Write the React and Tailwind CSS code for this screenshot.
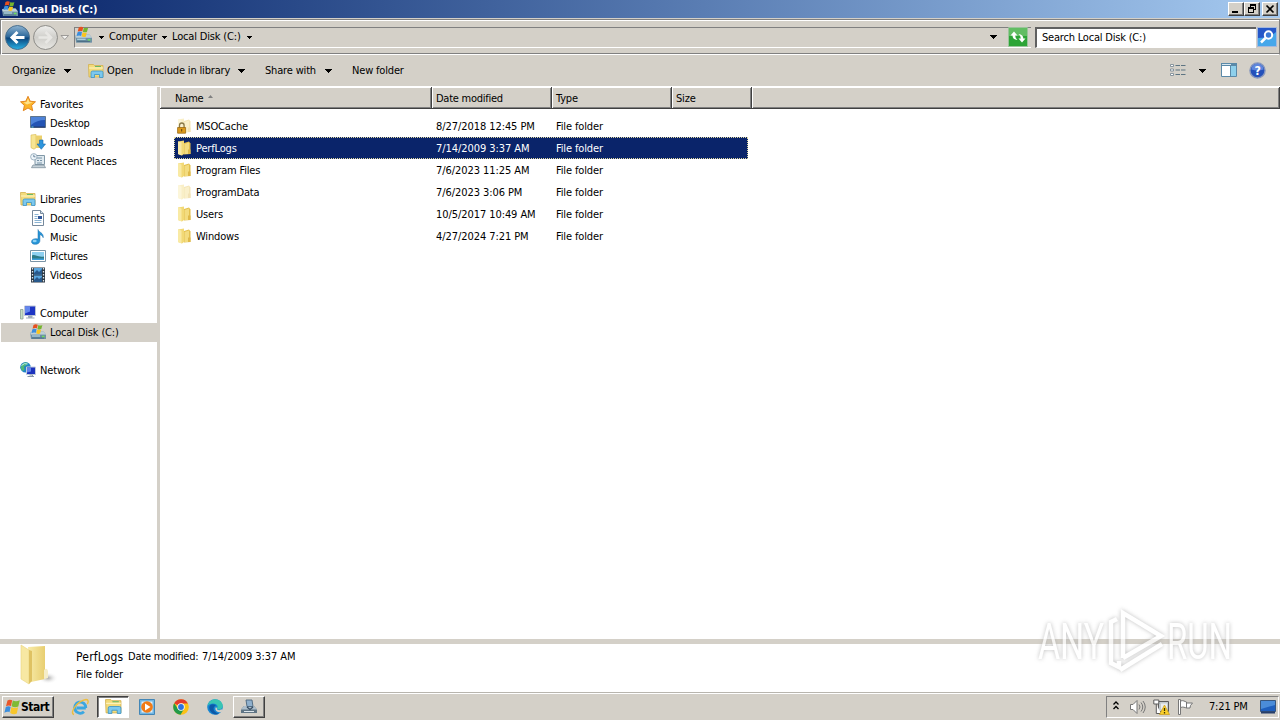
import { clsx } from 'clsx';

function Drive({ className = 'w-4 h-4' }) {
  return (
    <svg viewBox="0 0 16 16" className={className}>
      <path d="M0 8.500 2.500 7.500h11l2.500 3V15H1z" fill="#7f9aab" />
      <path d="M0 8.500 2.500 7.500h11l2.500 3H1z" fill="#bccfd8" />
      <path d="M1 11h14.800v4H1z" fill="#6b8fa5" />
      <path d="M2 12h8" stroke="#bfe0ec" />
      <path d="M2 14h12" stroke="#4b6d83" />
      <path d="M12 12.500h2.500" stroke="#6fe05c" strokeWidth="1.500" />
      <path d="M3.500 1C5 0 6.400.1 7.800.8L6.800 4.600C5.600 3.900 4.200 4 2.600 4.700z" fill="#e5501f" />
      <path d="M8.400 1c1.300.7 2.700.7 4 0L11.300 5c-1.300.7-2.700.6-3.900-.1z" fill="#76b52f" />
      <path d="M2.400 5.300c1.400-.8 2.800-.8 4.200-.1L5.700 8.900C4.500 8.200 3.100 8.300 1.500 9z" fill="#3b8ede" />
      <path d="M7.200 5.500c1.300.7 2.600.7 3.900.2L10.100 9.600c-1.300.5-2.600.4-3.900-.4z" fill="#fac41f" />
    </svg>
  );
}

function Flag({ className }) {
  return (
    <svg viewBox="0 0 16 16" className={className}>
      <path d="M3.500 1.500C5 .4 6.600.5 8.200 1.300L7 7C5.400 6.200 3.900 6.300 2 7.300z" fill="#e8562a" />
      <path d="M8.800 1.600c2 .9 4.300 1.200 7-.4L14.300 7.400c-2.200 1.100-4.500 1-6.700-.1z" fill="#7fba35" />
      <path d="M1.800 8c1.600-1 3.300-1 4.900-.2L5.500 13.200C4 12.400 2.400 12.600.4 13.700z" fill="#3b8ede" />
      <path d="M7.400 8.100c2 1.100 4.400 1.200 6.700.2L12.800 14.500c-2.300 1.100-4.500.8-6.600-.6z" fill="#f8c62c" />
    </svg>
  );
}

function Library({ className = 'w-4 h-4' }) {
  return (
    <svg viewBox="0 0 16 16" className={className}>
      <path d="M.5 1.500h5l1 1h8.500V14H1z" fill="#f3db7b" stroke="#d2b04e" strokeWidth=".8" />
      <path d="M1 5h14" stroke="#fff6c4" />
      <path d="M7 3.500h6" stroke="#69b967" />
      <path d="M3 14.500v-5q0-1.500 1.500-1.500h9q1.500 0 1.500 1.500v5h-3.500v-3H6.500v3z" fill="#7cc8ee" stroke="#3b93c5" strokeWidth=".8" />
    </svg>
  );
}

function Folder({ faded, locked }) {
  return (
    <svg viewBox="0 0 16 16" className="w-4 h-4">
      <g opacity={faded ? 0.4 : 1}>
        <path d="M1 1.500 7 .5v13.500l-2 1.500L1 14z" fill="#f2d976" />
        <path d="M1 1.500 4.500 2.500v13L1 14z" fill="#f9eaa4" />
        <path d="M7 3 12 1.500l1.500 2v10.500L7 14.500z" fill="#e3c04e" />
        <path d="M7.500 4 12 2.500v11.500L7.500 14z" fill="#f3dc80" />
        <path d="M11 9.500h2.500V14H11z" fill="#dfb94a" />
      </g>
      {locked && (
        <>
          <path d="M2.500 10V7.500a2.300 2.500 0 0 1 4.600 0V10" fill="none" stroke="#8a7a4a" strokeWidth="1.300" />
          <path d="M.6 9.500h8V15.200h-8z" fill="#dc9a1c" stroke="#9a6a14" strokeWidth=".8" />
          <path d="M4.700 11v2.500" stroke="#5e4210" />
        </>
      )}
    </svg>
  );
}

function Star() {
  return (
    <svg viewBox="0 0 16 16" className="w-4 h-4">
      <path d="m8 .3 2.200 4.900 5.300.6-3.900 3.600 1.100 5.300L8 12l-4.700 2.700 1.100-5.300L.5 5.800l5.300-.6z" fill="#fbb42a" stroke="#e07f1a" strokeWidth=".9" />
      <path d="m8 2.500 1.400 3.600 3.400.4-5.800 1.900-3.500-1.900 3.100-.4z" fill="#ffe28a" />
    </svg>
  );
}

function Desktop() {
  return (
    <svg viewBox="0 0 16 16" className="w-4 h-4">
      <path d="M.5 1.500h15v11H.5z" fill="#2354b4" stroke="#5f758c" />
      <path d="M1 2h14v3Q7 5 1 10z" fill="#4d82d8" />
      <path d="M1 12h14" stroke="#25396b" />
      <path d="M1.500 12h2" stroke="#5fd0ea" />
    </svg>
  );
}

function Downloads() {
  return (
    <svg viewBox="0 0 16 16" className="w-4 h-4">
      <path d="M1 1 6 .4v13.400L4 15.200 1 13.700z" fill="#f7e593" stroke="#d9b850" strokeWidth=".6" />
      <path d="M6 1.500h6V14H6z" fill="#ecd06c" />
      <path d="M9.500 6h3.500v4h2.500l-4.200 5.300L7 10h2.500z" fill="#2d95dd" stroke="#1769ad" strokeWidth=".6" />
    </svg>
  );
}

function Recent() {
  return (
    <svg viewBox="0 0 16 16" className="w-4 h-4">
      <path d="M5 2.500h9.500v9H5z" fill="#dfe9ef" stroke="#8198a7" />
      <path d="M7 5h5M7 7.500h2m1 0h2M7 10h5" stroke="#7894a8" />
      <path d="M3 12h11l1.500 2.700H1.500z" fill="#c6d2d9" stroke="#7f919d" strokeWidth=".8" />
      <circle cx="3.800" cy="3.800" r="3.200" fill="#eef5fa" stroke="#8da3b5" strokeWidth=".8" />
      <path d="M3.800 1.800v2h1.700" stroke="#4b6a86" strokeWidth=".8" fill="none" />
    </svg>
  );
}

function Documents() {
  return (
    <svg viewBox="0 0 16 16" className="w-4 h-4">
      <path d="M2.500.5h8l3 3v12h-11z" fill="#fff" stroke="#76899c" />
      <path d="M10.500.5v3h3" fill="#d2e0ec" stroke="#76899c" />
      <path d="M4.500 4.500h4m-4 2h3m-3 2h3m-3 2h7m-7 2h7" stroke="#8ab3d3" />
      <path d="M8 6h4v3H8z" fill="#31589b" />
    </svg>
  );
}

function Music() {
  return (
    <svg viewBox="0 0 16 16" className="w-4 h-4">
      <path d="M8 .5c.6 2.800 6 3.300 5.200 8.200-.8-2-2-2.700-3.300-3v6c0 4.500-8.400 4.800-8.400 1 0-2.600 3.800-3.700 6.500-2.600z" fill="#2796d8" stroke="#1a6caa" strokeWidth=".5" />
      <ellipse cx="4.700" cy="12" rx="2" ry="1.200" fill="#8ed2f5" />
    </svg>
  );
}

function Pictures() {
  return (
    <svg viewBox="0 0 16 16" className="w-4 h-4">
      <path d="M.5 2.500h15v11H.5z" fill="#fff" stroke="#7a94a6" />
      <path d="M2 4h12v8H2z" fill="#8fd0f0" />
      <path d="M2 7.500c3-1.500 5 2 12 1V12H2z" fill="#2e7b87" />
      <path d="M2 10.500h12V12H2z" fill="#3c9edb" />
    </svg>
  );
}

function Videos() {
  return (
    <svg viewBox="0 0 16 16" className="w-4 h-4">
      <path d="M1 .5h14v15H1z" fill="#2b3742" />
      <path d="M4 1h8v6.500H4zM4 8.500h8V15H4z" fill="#5aa7e0" />
      <path d="m4 6 3-3 2 2 3-3v5.500H4zM4 13l3-3 2 2 3-2v5H4z" fill="#28598c" />
      <path d="M2.500 1v14M13.500 1v14" stroke="#dfe8ee" strokeWidth="1.300" strokeDasharray="1.500 1.500" />
    </svg>
  );
}

function Computer() {
  return (
    <svg viewBox="0 0 16 16" className="w-4 h-4">
      <path d="M.5 4.500h2.500v9.500H.5z" fill="#c7dfc4" stroke="#8c9f94" strokeWidth=".8" />
      <path d="M4.500 1h11v9.500h-11z" fill="#1d35c4" stroke="#bcc5d6" />
      <path d="M5 1.500h5v5L5 8.500z" fill="#6487ee" />
      <path d="M8.500 11h3.500v1.500H8.500zM6 13h8.500" fill="#9eabba" stroke="#9eabba" />
    </svg>
  );
}

function Network() {
  return (
    <svg viewBox="0 0 16 16" className="w-4 h-4">
      <circle cx="5.500" cy="5.300" r="5.300" fill="#2184c8" />
      <path d="M2 2.500C4.500-.5 7 .5 8 1L6 3.500 4 4.500 4.500 7.500 3 9C.5 7.500.3 5 2 2.500z" fill="#4fb777" />
      <path d="M1.500 3.500q3-3 6-1.500" stroke="#b8ecf2" fill="none" />
      <path d="M6.500 5h9v7.500h-9z" fill="#1c32bd" stroke="#c1cbdc" />
      <path d="M7 5.500h4v4l-4 1z" fill="#5f80e8" />
      <path d="M9.500 13h3v1.500M7.500 14.500h6.500" stroke="#8797a8" fill="none" />
    </svg>
  );
}

function Caret({ className }) {
  return (
    <svg viewBox="0 0 7 4" className={clsx('shrink-0', className)} shapeRendering="crispEdges">
      <path d="M0 0h7L3.500 4z" fill="#000" />
    </svg>
  );
}

const groups = [
  {
    name: 'Favorites', icon: <Star />, items: [
      { name: 'Desktop', icon: <Desktop /> },
      { name: 'Downloads', icon: <Downloads /> },
      { name: 'Recent Places', icon: <Recent /> },
    ],
  },
  {
    name: 'Libraries', icon: <Library />, items: [
      { name: 'Documents', icon: <Documents /> },
      { name: 'Music', icon: <Music /> },
      { name: 'Pictures', icon: <Pictures /> },
      { name: 'Videos', icon: <Videos /> },
    ],
  },
  { name: 'Computer', icon: <Computer />, items: [{ name: 'Local Disk (C:)', icon: <Drive />, active: true }] },
  { name: 'Network', icon: <Network />, items: [] },
];

const files = [
  { name: 'MSOCache', date: '8/27/2018 12:45 PM', faded: true, locked: true },
  { name: 'PerfLogs', date: '7/14/2009 3:37 AM', selected: true },
  { name: 'Program Files', date: '7/6/2023 11:25 AM' },
  { name: 'ProgramData', date: '7/6/2023 3:06 PM', faded: true },
  { name: 'Users', date: '10/5/2017 10:49 AM' },
  { name: 'Windows', date: '4/27/2024 7:21 PM' },
];

function WinButton({ children }) {
  return (
    <div className="w-4 h-3.5 bg-[#d4d0c8] border border-t-white border-l-white border-r-[#404040] border-b-[#404040] shadow-[inset_-1px_-1px_0_#808080]">
      <svg viewBox="0 0 14 12" className="w-3.5 h-3" fill="none" stroke="#000" shapeRendering="crispEdges">{children}</svg>
    </div>
  );
}

function TitleBar() {
  return (
    <header className="h-[18px] shrink-0 flex items-center pl-0.5 pr-0.5 bg-linear-to-r from-[#0a246a] to-[#a6caf0] text-white font-bold">
      <Drive className="w-4 h-4 mr-px" />
      <span className="flex-1 pt-0.5 tracking-[-0.12px]">Local Disk (C:)</span>
      <div className="flex">
        <WinButton><path d="M3 9h6" strokeWidth="2" /></WinButton>
        <WinButton>
          <path d="M5 2h6M3 5h6" strokeWidth="2" />
          <path d="M5.500 2v3M10.500 2v5M9 6.500h2M3.500 5v5M8.500 5v5M3 9.500h6" />
        </WinButton>
        <div className="w-0.5" />
        <WinButton><path d="m3.500 2.500 7 7m0-7-7 7" strokeWidth="1.700" shapeRendering="auto" /></WinButton>
      </div>
    </header>
  );
}

function NavBar() {
  return (
    <div className="h-9 mt-px shrink-0 flex items-center pl-1 pr-0.5 border border-[#808080] border-b-white shadow-[inset_1px_1px_0_#fff,inset_0_-1px_0_#808080]">
      <svg viewBox="0 0 64 28" className="w-16 h-7 shrink-0">
        <defs>
          <linearGradient id="back" x2="0" y2="1">
            <stop offset="0" stopColor="#8fb4d2" /><stop offset=".48" stopColor="#2a6699" />
            <stop offset=".52" stopColor="#0b437b" /><stop offset="1" stopColor="#29b3e6" />
          </linearGradient>
          <linearGradient id="fwd" x2="0" y2="1">
            <stop offset="0" stopColor="#efefed" /><stop offset=".5" stopColor="#cfceca" /><stop offset="1" stopColor="#e9e8e4" />
          </linearGradient>
        </defs>
        <circle cx="12.500" cy="14.500" r="12" fill="url(#back)" stroke="#4a6f8d" />
        <path d="M19.500 14.500H7m5.500-5.500L7 14.500l5.500 5.500" fill="none" stroke="#fff" strokeWidth="3" />
        <circle cx="40.500" cy="14.500" r="12" fill="url(#fwd)" stroke="#8d8c88" />
        <path d="M33.500 14.500H46m-5.500-5.500L46 14.500l-5.500 5.500" fill="none" stroke="#e8e7e4" strokeWidth="2.500" />
        <path d="M56 12.500h7.500L59.800 16.500z" fill="#f4f3f0" stroke="#8a8986" strokeWidth=".8" />
      </svg>
      <div className="flex-1 h-[21px] ml-[5px] flex items-center border-t border-l border-[#808080] border-b border-b-white tracking-[-0.17px]">
        <Drive className="w-[17px] h-[18px] -mt-1" />
        <Caret className="w-[5px] h-[3px] ml-[7px]" />
        <span className="ml-[5px] w-[47px]">Computer</span>
        <Caret className="w-[5px] h-[3px] ml-1.5" />
        <span className="ml-[5px] w-[69px]">Local Disk (C:)</span>
        <Caret className="w-[5px] h-[3px] ml-1.5" />
        <Caret className="w-[7px] h-1 ml-auto mr-[11px]" />
        <svg viewBox="0 0 20 20" className="w-5 h-5 mr-[3px]">
          <path d="M.5.5h19v19H.5z" fill="#2da436" stroke="#9bc49b" />
          <path d="M1 1h18v8H1z" fill="#62bd63" />
          <path d="M2.500 8.500 6 4.500l3.500 4H7.200q0 3 2.300 4.500-5-.5-5-4.500z" fill="#fff" />
          <path d="m10.500 11.500 3.500 4 3.500-4h-2.200q0-4-4.800-4.500 2.300 1.500 2.300 4.500z" fill="#fff" />
        </svg>
      </div>
      <div className="w-[221px] h-[21px] ml-1 flex items-center pl-[5px] bg-white border-t-2 border-l-2 border-[#606060] border-b border-b-white tracking-[-0.2px]">
        Search Local Disk (C:)
      </div>
      <svg viewBox="0 0 20 20" className="w-5 h-5 ml-px shrink-0">
        <path d="M.5.5h19v19H.5z" fill="#2557c8" stroke="#a4b8dc" />
        <path d="M1 11c8 0 14-2 18-6v14H1z" fill="#46a7ea" />
        <circle cx="11.500" cy="8" r="3.700" fill="#3b79d6" stroke="#fff" strokeWidth="2" />
        <path d="m8.500 11-4.500 4.500" stroke="#fff" strokeWidth="2.500" />
      </svg>
    </div>
  );
}

function Toolbar() {
  return (
    <div className="h-[31px] shrink-0 flex items-center pl-3 pr-3.5">
      <span className="w-[52px] tracking-[-0.12px]">Organize</span>
      <Caret className="w-[7px] h-1" />
      <Library className="w-4 h-4 ml-[17px]" />
      <span className="ml-[3px] w-[43px] tracking-[-0.02px]">Open</span>
      <span className="w-[88px]">Include in library</span>
      <Caret className="w-[7px] h-1" />
      <span className="ml-5 w-[60px]">Share with</span>
      <Caret className="w-[7px] h-1" />
      <span className="ml-5">New folder</span>
      <svg viewBox="0 0 16 14" className="w-4 h-3.5 ml-auto -mt-0.5" fill="none">
        <path d="M.5 1.500h3v2h-3zM.5 6h3v2h-3zM.5 10.500h3v2h-3z" fill="#fff" stroke="#7d8b96" strokeWidth=".9" />
        <path d="M5.500 2.500H10m1 0h4.500M5.500 7H10m1 0h4.500M5.500 11.500H10m1 0h4.500" stroke="#5d7482" />
      </svg>
      <Caret className="w-[7px] h-1 ml-[13px]" />
      <svg viewBox="0 0 16 14" className="w-4 h-3.5 ml-[15px] -mt-0.5">
        <path d="M.5.5h15v13H.5z" fill="#fff" stroke="#5a89a8" />
        <path d="M0 0h16v3H0z" fill="#5a89a8" />
        <path d="M1 1h9v1H1z" fill="#d8e7f0" />
        <path d="M10 3h5v10h-5z" fill="#8ed0ec" /><path d="M9.500 3v10" stroke="#5a89a8" />
      </svg>
      <svg viewBox="0 0 18 18" className="w-[17px] h-[17px] ml-3 -mt-px">
        <circle cx="9" cy="9" r="8" fill="#2450ba" stroke="#8797bd" strokeWidth="1.500" />
        <path d="M2.500 8a6.500 6.500 0 0 1 13 0q-6 2-13 0z" fill="#5f86dc" />
        <text x="9" y="13.500" textAnchor="middle" fill="#fff" fontSize="13" fontWeight="700">?</text>
      </svg>
    </div>
  );
}

function Sidebar() {
  return (
    <aside className="w-[157px] shrink-0 bg-white pt-2 pl-px tracking-[-0.16px]">
      {groups.map((g) => (
        <section key={g.name} className="mb-[19px]">
          <div className="h-[19px] flex items-center gap-1 pl-[19px] pb-px">{g.icon}<span className="pt-0.5">{g.name}</span></div>
          {g.items.map((i) => (
            <div key={i.name} className={clsx('h-[19px] flex items-center gap-1 pl-[29px] pb-px', i.active && 'bg-[#d4d0c8]')}>
              {i.icon}<span className="pt-0.5">{i.name}</span>
            </div>
          ))}
        </section>
      ))}
    </aside>
  );
}

const cell = 'h-full flex items-center pt-0.5 border-r border-r-[#404040] shadow-[inset_1px_1px_0_#fff,inset_-1px_-1px_0_#808080]';

function FileList() {
  return (
    <main className="flex-1 flex flex-col bg-white">
      <div className="h-[22px] flex bg-[#d4d0c8] border-b border-[#404040]">
        <div className={clsx(cell, 'w-[272px] pl-[15px]')}>
          <span>Name</span>
          <svg viewBox="0 0 5 3" className="w-[5px] h-[3px] ml-1 -mt-1"><path d="M0 3h5L2.500 0z" fill="#808080" /></svg>
        </div>
        <div className={clsx(cell, 'w-[120px] pl-1 tracking-[-0.25px]')}>Date modified</div>
        <div className={clsx(cell, 'w-[120px] pl-1')}>Type</div>
        <div className={clsx(cell, 'w-20 pl-1')}>Size</div>
        <div className={clsx(cell, 'flex-1')} />
      </div>
      <div className="pt-1.5 pl-3.5">
        {files.map((f) => (
          <div
            key={f.name}
            className={clsx(
              'w-[574px] h-[22px] flex items-center pl-0.5 border border-dotted',
              f.selected ? 'bg-[#0a246a] border-[#e0d9a0] text-white' : 'border-transparent',
            )}
          >
            <Folder faded={f.faded} locked={f.locked} />
            <span className="ml-[3px] pt-0.5 w-60">{f.name}</span>
            <span className="w-[120px] pt-0.5 tracking-[-0.07px]">{f.date}</span>
            <span className="pt-0.5 tracking-[-0.14px]">File folder</span>
          </div>
        ))}
      </div>
    </main>
  );
}

function Details() {
  return (
    <div className="h-[49px] shrink-0 flex bg-white border-b border-[#b8b5ae]">
      <svg viewBox="0 0 40 44" className="w-10 h-11 ml-[19px]">
        <defs>
          <linearGradient id="fold"><stop offset="0" stopColor="#f8eba9" /><stop offset="1" stopColor="#e8ce70" /></linearGradient>
          <radialGradient id="shade"><stop offset="0" stopColor="#aaa" /><stop offset="1" stopColor="#fff" stopOpacity="0" /></radialGradient>
        </defs>
        <ellipse cx="29" cy="34" rx="10" ry="6" fill="url(#shade)" />
        <path d="M9 3 26 2v33l-14 3z" fill="url(#fold)" />
        <path d="M2 1 10 6v34l-8-5z" fill="#f7e8a3" stroke="#e9d37d" strokeWidth=".6" />
        <path d="M10 6v34l3-3V7z" fill="#dfc263" />
        <path d="M25 26q3-3 4 1v7l-4 1z" fill="#f5edc9" />
      </svg>
      <div className="ml-[17px] pt-1">
        <div className="h-[18px] flex items-center">
          <span className="w-[52px] text-xs tracking-[0.2px]">PerfLogs</span>
          <span className="w-[74px] tracking-[-0.22px]">Date modified:</span>
          <span className="tracking-[-0.07px]">7/14/2009 3:37 AM</span>
        </div>
        <div className="h-[18px] flex items-center tracking-[-0.14px]">File folder</div>
      </div>
    </div>
  );
}

function Taskbar() {
  return (
    <footer className="h-[27px] shrink-0 flex items-center pl-0.5 pr-px pb-px border-t border-white">
      <div className="w-[52px] h-[22px] flex items-center pl-px border border-t-white border-l-white border-r-[#404040] border-b-[#404040] shadow-[inset_-1px_-1px_0_#808080] font-bold text-xs tracking-[-0.5px]">
        <Flag className="w-4 h-4 mr-px shrink-0" />Start
      </div>
      <svg viewBox="0 0 18 18" className="w-[18px] h-[18px] ml-[17px]" fill="none">
        <path d="M14.800 10H5.500m9.300 0A5.600 5.600 0 1 0 13 13.800" stroke="#3ba7e1" strokeWidth="2.800" />
        <path d="M3 16.500C-2 15.500 6 3 15 1.500c3 0 2.300 3 1.300 4.500" stroke="#edbd3d" strokeWidth="1.400" />
      </svg>
      <div className="w-8 h-[22px] ml-2 flex items-center justify-center bg-white border border-[#404040] border-r-white border-b-white shadow-[inset_1px_1px_0_#808080]">
        <Library className="w-[17px] h-[17px]" />
      </div>
      <svg viewBox="0 0 16 16" className="w-4 h-4 ml-2.5">
        <path d="M.5.5h15v15H.5z" fill="#70b6e3" stroke="#4386b6" />
        <path d="M2.500 2.500h11v11h-11z" fill="#e2eff7" />
        <circle cx="8" cy="8" r="5.800" fill="#f17b17" /><path d="M6 4.500 11.500 8 6 11.500z" fill="#fff" />
      </svg>
      <svg viewBox="0 0 16 16" className="w-4 h-4 ml-[18px]">
        <circle cx="8" cy="8" r="7.800" fill="#fbc116" />
        <path d="M8 8 1.200 4.200A7.800 7.800 0 0 1 14.900 4.500H8z" fill="#e33b2e" />
        <path d="M1.200 4.200A7.800 7.800 0 0 0 7.500 15.800L11 10 5 10z" fill="#229a4a" />
        <circle cx="8" cy="8" r="3.700" fill="#fff" /><circle cx="8" cy="8" r="2.900" fill="#2e72df" />
      </svg>
      <svg viewBox="0 0 16 16" className="w-4 h-4 ml-[18px]">
        <circle cx="8" cy="8" r="7.800" fill="#1686d2" />
        <path d="M.5 7C1.500 2.500 4.500.2 8.500.2c5 .2 8.200 4.600 7 8-1.200 3-5.500 2.600-5.500 1.300 0-1 .8-1.200.5-2.500C9.800 4.500 4 3 .5 7z" fill="#39c5b3" />
        <path d="M9 6C3 3.500 1 8 3 11.500 5 15 9 16.500 12 14.700 8 14 5.500 11 7 8z" fill="#0d59a8" />
        <path d="M10 9.500c-.5 1.800 3.500 2.400 5 .5l1 1.500-1.800 1.800C10 13.500 7 11 9 8z" fill="#d4d0c8" />
      </svg>
      <div className="w-8 h-[22px] ml-2.5 flex items-center justify-center border border-t-white border-l-white border-r-[#404040] border-b-[#404040] shadow-[inset_-1px_-1px_0_#808080]">
        <svg viewBox="0 0 18 18" className="w-[18px] h-[18px]">
          <path d="M1 11.500 4 8h10l3 3.500V15H1z" fill="#5f7484" /><path d="M1 11.500 4 8h10l3 3.500z" fill="#aebfcc" />
          <path d="M6 2h6l1 6.500H7z" fill="#8fb0cd" stroke="#4a657d" strokeWidth=".9" />
          <path d="M4 13.500h10" stroke="#dce5eb" /><path d="m7 9 3 2.500L13 9" stroke="#364c62" strokeWidth="1.300" fill="none" />
        </svg>
      </div>
      <div className="w-[173px] h-[22px] ml-auto flex items-center pl-1.5 border border-[#808080] border-r-white border-b-white">
        <svg viewBox="0 0 6 9" className="w-1.5 h-[9px] -mt-0.5" fill="none" stroke="#000" strokeWidth="1.300"><path d="M.5 3.500 3 1l2.500 2.500M.5 8 3 5.500 5.500 8" /></svg>
        <svg viewBox="0 0 17 16" className="w-[17px] h-4 ml-2.5" fill="none" stroke="#777">
          <path d="M1.500 5.500h2.500L8 1.500v13l-4-4H1.500z" fill="#fff" />
          <path d="M10 5.500q2 2.500 0 5M12 3.500q3.500 4.500 0 9M14 2q4.500 6 0 12" />
        </svg>
        <svg viewBox="0 0 17 16" className="w-[17px] h-4 ml-[7px]" fill="none">
          <path d="M5.500 2.500h10v10h-10z" fill="#c3cacd" stroke="#5c5c5c" /><path d="M8 4.500h6v6H8z" fill="#e9edef" />
          <path d="M.8 1h5v4h-5zM3.300 5v9.500H8" fill="#fff" stroke="#5c5c5c" />
          <path d="m11.500 6 5 9.500h-10z" fill="#fad02a" stroke="#c99a18" strokeWidth=".7" /><path d="M11.500 9v3m0 1v1.500" stroke="#3a2f00" strokeWidth="1.300" />
        </svg>
        <svg viewBox="0 0 17 16" className="w-[17px] h-4 ml-[7px]" fill="#fff" stroke="#777">
          <path d="M1.500.5h2v15h-2z" /><path d="M3.500 2c3-1 4 .5 6 1v6c-2-.5-3-1.500-6-.5zM9.500 4h6l-2 2.500-.5 2.500h-3.500z" />
        </svg>
        <span className="ml-[15px] w-[51px]">7:21 PM</span>
        <svg viewBox="0 0 16 14" className="w-4 h-3.5">
          <path d="M.5.5h15v11H.5z" fill="#1f5fbd" stroke="#38567d" /><path d="M1 1h14v4L1 9z" fill="#4b8cd8" />
          <path d="M1 12.500h14" stroke="#273e6a" strokeWidth="2" />
        </svg>
      </div>
    </footer>
  );
}

function Watermark() {
  return (
    <svg viewBox="0 0 220 76" className="absolute left-[1036px] top-[602px] w-[220px] h-[76px] opacity-75 drop-shadow-[0_0_2px_#aaa]">
      <g fill="#fff" fontFamily="Roboto, sans-serif" fontSize="50">
        <text x="2" y="57" textLength="66" lengthAdjust="spacingAndGlyphs">ANY</text>
        <text x="131" y="57" textLength="65" lengthAdjust="spacingAndGlyphs">RUN</text>
      </g>
      <g fill="none" stroke="#fff" strokeWidth="4.500">
        <path d="M87 56V11l38 23-38 22" />
        <path d="M81 17l-6 3v41l8 4V59M84 68l42-26" />
      </g>
    </svg>
  );
}

export default function App() {
  return (
    <div className="relative w-[1280px] h-[720px] overflow-hidden flex flex-col bg-[#d4d0c8] text-black text-[11px] leading-[14px] tracking-[-0.17px] whitespace-nowrap font-['DejaVu_Sans_Condensed','DejaVu_Sans',sans-serif]">
      <TitleBar />
      <NavBar />
      <Toolbar />
      <div className="flex-1 flex gap-[3px] border-t border-white">
        <Sidebar />
        <FileList />
      </div>
      <div className="h-[5px] shrink-0" />
      <Details />
      <Taskbar />
      <Watermark />
    </div>
  );
}
